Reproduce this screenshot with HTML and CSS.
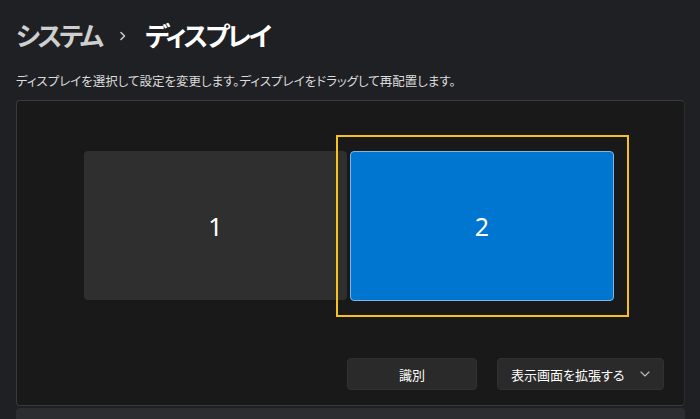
FILE: index.html
```html
<!DOCTYPE html>
<html lang="ja">
<head>
<meta charset="utf-8">
<link rel="stylesheet" href="styles.css">
</head>
<body>
<div class="page">
  <h1 class="title"><span class="crumb">システム</span><span class="sep"><svg width="8" height="10" viewBox="0 0 8 10"><path d="M2 1.5 L5.5 5 L2 8.5" fill="none" stroke="#c8c8c8" stroke-width="1.6" stroke-linecap="round" stroke-linejoin="round"/></svg></span><span class="current">ディスプレイ</span></h1>
  <p class="desc">ディスプレイを選択して設定を変更します。ディスプレイをドラッグして再配置します。</p>
  <div class="panel">
    <div class="canvas">
      <div class="monitor m1">1</div>
      <div class="monitor m2">2</div>
      <div class="focus"></div>
    </div>
    <div class="actions">
      <button class="btn identify">識別</button>
      <button class="btn select">表示画面を拡張する<svg class="chev" width="10" height="6" viewBox="0 0 10 6"><path d="M1 1 L5 5 L9 1" fill="none" stroke="#bdbdbd" stroke-width="1.1" stroke-linecap="round" stroke-linejoin="round"/></svg></button>
    </div>
  </div>
  <div class="next-card"></div>
</div>
</body>
</html>
```

FILE: styles.css
```css
html, body {
  margin: 0;
  padding: 0;
  background: #1f2023;
  height: 100%;
  overflow: hidden;
}
body {
  font-family: "Noto Sans CJK JP", "Noto Sans", sans-serif;
  font-feature-settings: "palt";
  color: #fff;
}
.page {
  padding: 0 15px 0 16px;
}
.title {
  margin: 0;
  padding-top: 20px;
  font-size: 26px;
  line-height: 30px;
  font-weight: 600;
  letter-spacing: -2.6px;
  display: flex;
  align-items: center;
}
.crumb {
  color: #cfcfcf;
}
.sep {
  display: flex;
  align-items: center;
  width: 44px;
  justify-content: center;
  padding-top: 2px;
}
.current {
  color: #ffffff;
}
.desc {
  margin: 0;
  padding-top: 23px;
  font-size: 12.5px;
  line-height: 16px;
  color: #dcdcdc;
}
.panel {
  margin-top: 11px;
  height: 304px;
  background: #191919;
  border: 1px solid #3a3a3a;
  border-right-color: #2c2c2c;
  border-radius: 4px;
  display: flex;
  flex-direction: column;
}
.canvas {
  position: relative;
  height: 257px;
}
.monitor {
  position: absolute;
  display: flex;
  align-items: center;
  justify-content: center;
  font-family: "Noto Sans", sans-serif;
  font-weight: 400;
  font-size: 25px;
  color: #fff;
  border-radius: 4px;
  box-sizing: border-box;
}
.m1 {
  left: 67px;
  top: 50px;
  width: 263px;
  height: 149px;
  background: #2f2f2f;
}
.m2 {
  left: 333px;
  top: 50px;
  width: 264px;
  height: 150px;
  background: #0076d0;
  border: 1px solid #7fb6e6;
}
.focus {
  position: absolute;
  left: 319px;
  top: 34px;
  width: 293px;
  height: 182px;
  box-sizing: border-box;
  border: 2px solid #f7c21c;
}
.actions {
  display: flex;
  justify-content: flex-end;
  gap: 20px;
  padding-right: 20px;
}
.btn {
  height: 32px;
  box-sizing: border-box;
  background: #2a2a2a;
  border: 1px solid #313131;
  border-radius: 4px;
  color: #fff;
  font-family: "Noto Sans CJK JP", sans-serif;
  font-feature-settings: "palt";
  font-size: 13px;
  display: flex;
  align-items: center;
  padding: 0;
}
.identify {
  width: 130px;
  justify-content: center;
}
.select {
  width: 167px;
  padding-left: 13px;
}
.chev {
  margin-left: 16px;
}
.next-card {
  margin-top: 2px;
  height: 20px;
  background: #2b2d30;
  border-radius: 4px 4px 0 0;
}
```
